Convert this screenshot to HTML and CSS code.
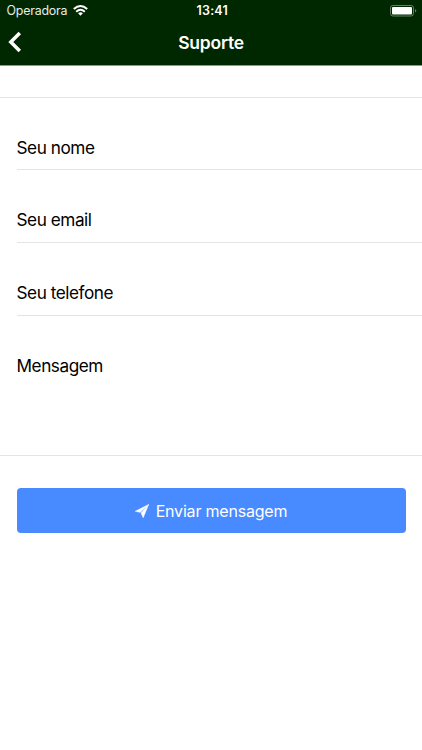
FILE: index.html
```html
<!DOCTYPE html>
<html lang="pt-BR">
<head>
<meta charset="utf-8">
<title>Suporte</title>
<link rel="stylesheet" href="styles.css">
</head>
<body>
<header class="header">
  <div class="status">
    <div class="carrier"><span class="carrier-name">Operadora</span>
      <svg class="wifi" width="15" height="11" viewBox="0 0 15 11"><g fill="none" stroke="#fff" stroke-width="2"><path d="M.8 4.1Q7.5-2 14.2 4.1"/><path d="M3.2 6.7Q7.5 2.8 11.8 6.7"/></g><path d="M5.1 8.3Q7.5 6.3 9.9 8.3L7.5 10.8Z" fill="#fff"/></svg>
    </div>
    <div class="time">13:41</div>
    <div class="power"><svg width="27" height="12" viewBox="0 0 27 12"><rect x=".5" y=".5" width="23" height="10.5" rx="2.4" fill="none" stroke="#667e66"/><rect x="2" y="2" width="20" height="7.5" rx="1" fill="#fff"/><path d="M25 4q1.3.5 1.3 1.8T25 7.6Z" fill="#667e66"/></svg></div>
  </div>
  <div class="nav">
    <svg class="back" width="14" height="22" viewBox="0 0 14 22"><path d="M11.8 2 2.8 11 11.8 20" fill="none" stroke="#fff" stroke-width="3.5"/></svg>
    <h1 class="title">Suporte</h1>
  </div>
</header>
<main>
  <form class="form">
    <div class="field"><label class="label">Seu nome</label></div>
    <div class="field"><label class="label">Seu email</label></div>
    <div class="field"><label class="label">Seu telefone</label></div>
    <div class="field message"><label class="label">Mensagem</label></div>
  </form>
  <button class="send" type="button"><svg class="plane" width="14" height="14" viewBox="0 0 14 14"><path d="M13.9.2 0 7.3 5.2 8.6Z M13.9.2 5.9 9.1 8.2 14Z" fill="#fff" stroke="#fff" stroke-width=".3"/></svg><span class="send-text">Enviar mensagem</span></button>
</main>
</body>
</html>
```
FILE: styles.css
```css
* { box-sizing: border-box; }
body { margin: 0; background: #fff; color: #000; font-family: Inter, sans-serif; }
.header { height: 66px; background: #002800; color: #fff; border-bottom: 1px solid #899b89; }
.status { height: 21px; display: grid; grid-template-columns: 1fr auto 1fr; align-items: center; padding: 0 5px 0 6.5px; }
.carrier { display: flex; align-items: center; gap: 5.5px; color: #e8eee8; }
.carrier-name { font-size: 12.4px; letter-spacing: -.2px; line-height: 21px; }
.time { font-size: 12.5px; font-weight: 600; letter-spacing: .2px; padding-left: 1px; }
.power { display: flex; justify-content: flex-end; }
.nav { height: 42px; display: grid; grid-template-columns: 1fr auto 1fr; align-items: center; padding: 0 8px; }
.title { margin: 0; padding-top: 2px; font-size: 17.5px; font-weight: 600; line-height: 22px; letter-spacing: -.25px; }
.form { margin-top: 31px; border-top: 1px solid #e4e4e4; border-bottom: 1px solid #e4e4e4; padding-left: 16.5px; }
.field { height: 72.75px; padding-top: 38px; border-bottom: 1px solid #e4e4e4; }
.field:first-child { height: 72px; }
.message { height: 139px; border-bottom: 0; }
.label { display: block; font-size: 17.2px; line-height: 24px; letter-spacing: -.45px; }
.send { display: flex; align-items: center; justify-content: center; gap: 7px; width: 389px; height: 45px; margin: 32.5px 0 0 16.5px; padding: 0; border: 0; border-radius: 4px; background: #488aff; color: #fff; font-family: inherit; font-size: 16px; letter-spacing: -.2px; }
.send-text { padding-top: 1px; }
```
